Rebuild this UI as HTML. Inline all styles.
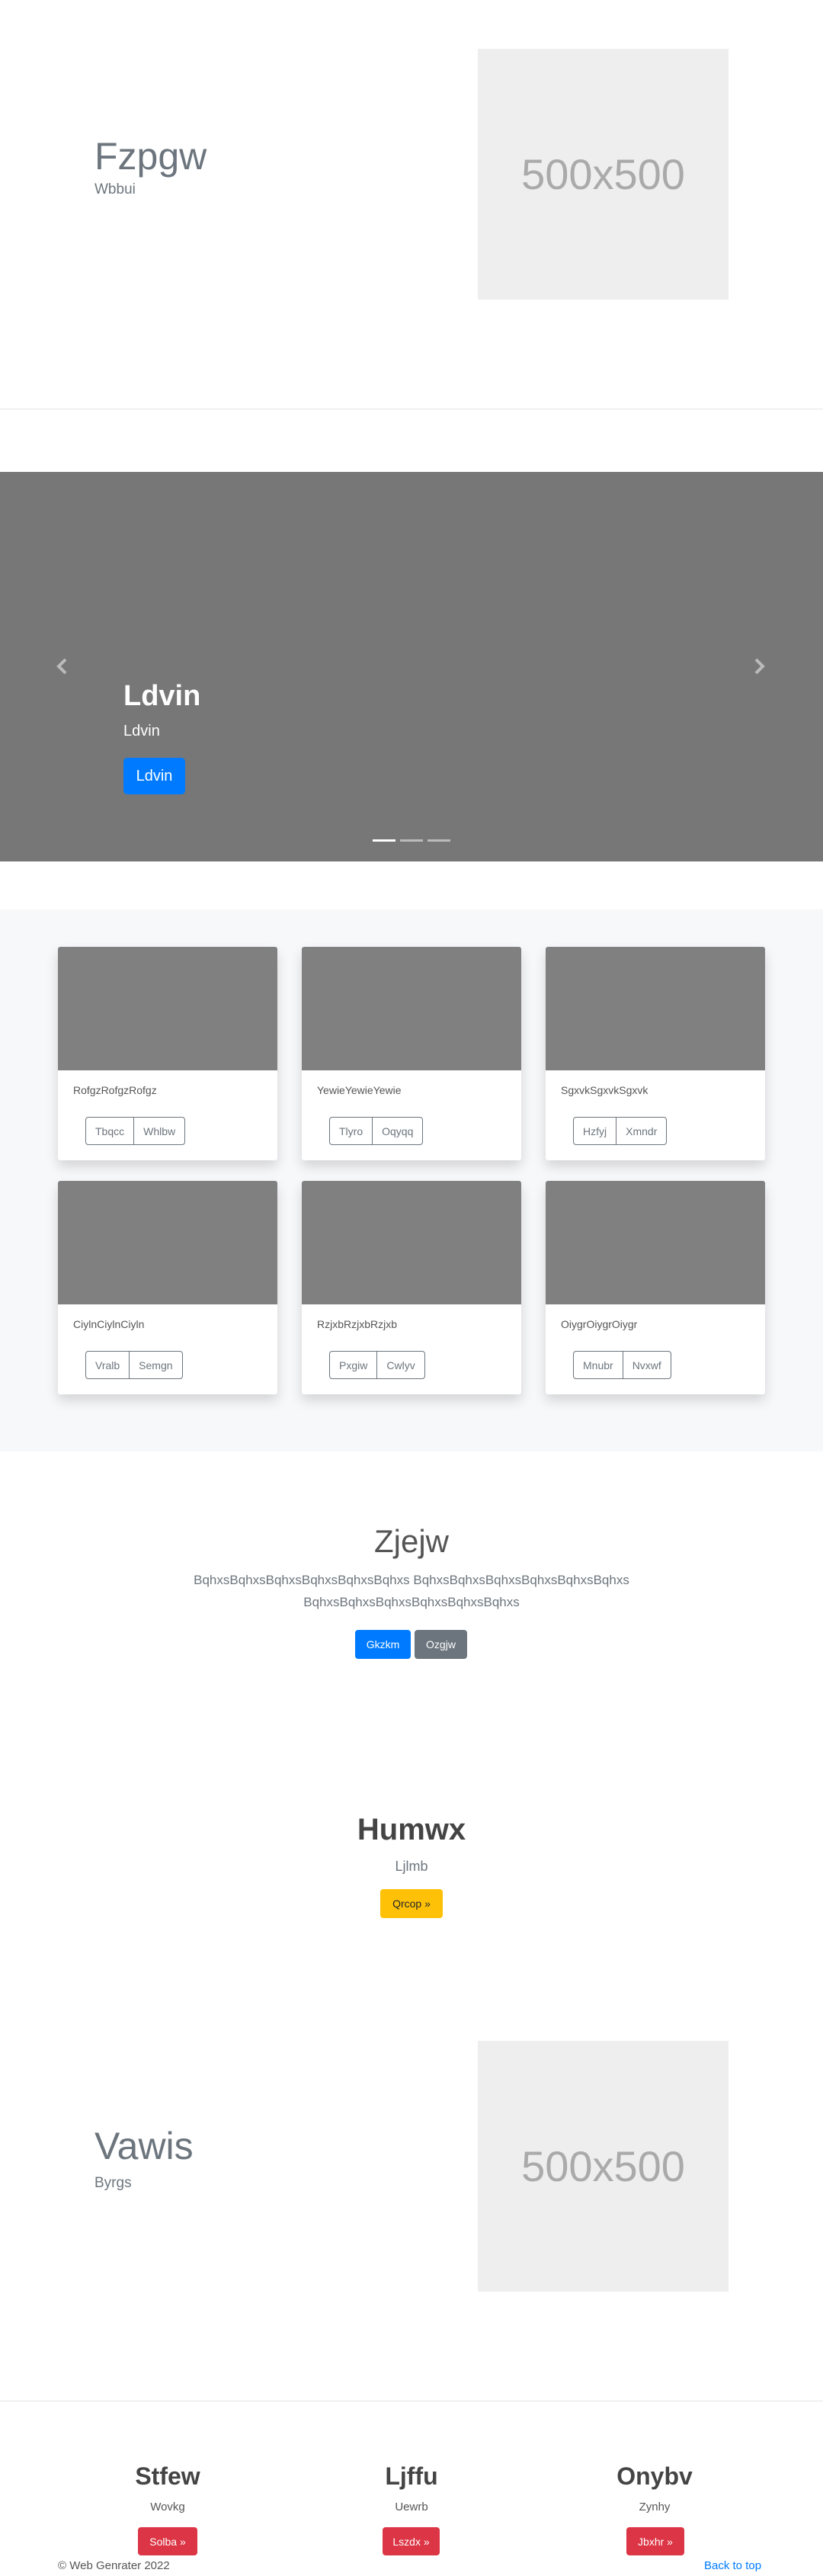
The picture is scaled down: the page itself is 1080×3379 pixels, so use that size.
<!DOCTYPE html>
<html><head><meta charset="utf-8"><style>
*{box-sizing:border-box;margin:0;padding:0}
body{width:1080px;height:3379px;position:relative;font-family:"Liberation Sans",sans-serif;color:#212529;background:#fff;overflow:hidden}
.a{position:absolute}
.ph{position:absolute;background:#eee;color:#aaa;display:flex;align-items:center;justify-content:center;font-size:56px;font-weight:300}
.btn{position:absolute;display:flex;align-items:center;justify-content:center;border-radius:4px;font-size:14px;color:#fff}
.card{position:absolute;width:288px;height:280px;background:#fff;border-radius:3px;box-shadow:0 8px 16px rgba(0,0,0,.15);overflow:hidden}
.card .img{height:162px;background:#808080}
.card .t{position:absolute;left:20px;font-size:14px;color:#555;top:180px}
.bg{position:absolute;left:36px;top:223px;height:37px;display:flex;border:1px solid #6c757d;border-radius:4px}
.bg span{padding:0 12px;display:flex;align-items:center;font-size:14px;color:#6c757d}
.bg span+span{border-left:1px solid #6c757d}
.c{text-align:center;left:0;width:1080px}
</style></head><body>
<div class="a" style="left:124px;top:176px;font-size:50px;color:#6c757d;font-weight:300">Fzpgw</div>
<div class="a" style="left:124px;top:238px;font-size:19px;color:#6c757d;font-weight:300">Wbbui</div>
<div class="ph" style="left:627px;top:64px;width:329px;height:329px">500x500</div>
<div class="a" style="left:0;top:536px;width:1080px;height:1px;background:#e5e5e5"></div>

<div class="a" style="left:0;top:619px;width:1080px;height:511px;background:#777"></div>
<svg class="a" style="left:72px;top:862px" width="18" height="24" viewBox="0 0 18 24"><path d="M14 3 L5 12 L14 21" stroke="#bbb" stroke-width="4" fill="none"/></svg>
<svg class="a" style="left:988px;top:862px" width="18" height="24" viewBox="0 0 18 24"><path d="M4 3 L13 12 L4 21" stroke="#bbb" stroke-width="4" fill="none"/></svg>
<div class="a" style="left:162px;top:892px;font-size:38px;font-weight:bold;color:#fff">Ldvin</div>
<div class="a" style="left:162px;top:948px;font-size:20px;color:#fff">Ldvin</div>
<div class="btn" style="left:162px;top:994px;width:81px;height:48px;background:#007bff;font-size:20px;border-radius:5px">Ldvin</div>
<div class="a" style="left:489px;top:1101px;width:30px;height:3px;background:#fff"></div>
<div class="a" style="left:525px;top:1101px;width:30px;height:3px;background:#bbb"></div>
<div class="a" style="left:561px;top:1101px;width:30px;height:3px;background:#bbb"></div>

<div class="a" style="left:0;top:1193px;width:1080px;height:711px;background:#f7f8fa"></div>
<div class="card" style="left:76px;top:1242px"><div class="img"></div><div class="t">RofgzRofgzRofgz</div><div class="bg"><span>Tbqcc</span><span>Whlbw</span></div></div>
<div class="card" style="left:396px;top:1242px"><div class="img"></div><div class="t">YewieYewieYewie</div><div class="bg"><span>Tlyro</span><span>Oqyqq</span></div></div>
<div class="card" style="left:716px;top:1242px"><div class="img"></div><div class="t">SgxvkSgxvkSgxvk</div><div class="bg"><span>Hzfyj</span><span>Xmndr</span></div></div>
<div class="card" style="left:76px;top:1549px"><div class="img"></div><div class="t">CiylnCiylnCiyln</div><div class="bg"><span>Vralb</span><span>Semgn</span></div></div>
<div class="card" style="left:396px;top:1549px"><div class="img"></div><div class="t">RzjxbRzjxbRzjxb</div><div class="bg"><span>Pxgiw</span><span>Cwlyv</span></div></div>
<div class="card" style="left:716px;top:1549px"><div class="img"></div><div class="t">OiygrOiygrOiygr</div><div class="bg"><span>Mnubr</span><span>Nvxwf</span></div></div>

<div class="a c" style="top:1998px;font-size:42px;font-weight:300;color:#555">Zjejw</div>
<div class="a c" style="top:2058px;font-size:17px;line-height:29px;font-weight:300;color:#6c757d;white-space:nowrap">BqhxsBqhxsBqhxsBqhxsBqhxsBqhxs BqhxsBqhxsBqhxsBqhxsBqhxsBqhxs<br>BqhxsBqhxsBqhxsBqhxsBqhxsBqhxs</div>
<div class="btn" style="left:466px;top:2138px;width:73px;height:38px;background:#007bff">Gkzkm</div>
<div class="btn" style="left:544px;top:2138px;width:69px;height:38px;background:#6c757d">Ozgjw</div>

<div class="a c" style="top:2378px;font-size:40px;font-weight:bold;color:#444">Humwx</div>
<div class="a c" style="top:2438px;font-size:18px;font-weight:300;color:#6c757d">Ljlmb</div>
<div class="btn" style="left:499px;top:2478px;width:82px;height:38px;background:#ffc107;color:#212529">Qrcop »</div>

<div class="a" style="left:124px;top:2786px;font-size:50px;color:#6c757d;font-weight:300">Vawis</div>
<div class="a" style="left:124px;top:2853px;font-size:19px;color:#6c757d;font-weight:300">Byrgs</div>
<div class="ph" style="left:627px;top:2677px;width:329px;height:329px">500x500</div>
<div class="a" style="left:0;top:3149px;width:1080px;height:1px;background:#e5e5e5"></div>

<div class="a" style="left:80px;width:280px;text-align:center;top:3230px;font-size:32px;font-weight:bold;color:#444">Stfew</div>
<div class="a" style="left:400px;width:280px;text-align:center;top:3230px;font-size:32px;font-weight:bold;color:#444">Ljffu</div>
<div class="a" style="left:719px;width:280px;text-align:center;top:3230px;font-size:32px;font-weight:bold;color:#444">Onybv</div>
<div class="a" style="left:80px;width:280px;text-align:center;top:3280px;font-size:15px;color:#555">Wovkg</div>
<div class="a" style="left:400px;width:280px;text-align:center;top:3280px;font-size:15px;color:#555">Uewrb</div>
<div class="a" style="left:719px;width:280px;text-align:center;top:3280px;font-size:15px;color:#555">Zynhy</div>
<div class="btn" style="left:181px;top:3315px;width:78px;height:37px;background:#dc3545">Solba »</div>
<div class="btn" style="left:502px;top:3315px;width:75px;height:37px;background:#dc3545">Lszdx »</div>
<div class="btn" style="left:822px;top:3315px;width:76px;height:37px;background:#dc3545">Jbxhr »</div>
<div class="a" style="left:76px;top:3357px;font-size:15px;color:#555">© Web Genrater 2022</div>
<div class="a" style="left:924px;top:3357px;font-size:15px;color:#007bff">Back to top</div>
</body></html>
